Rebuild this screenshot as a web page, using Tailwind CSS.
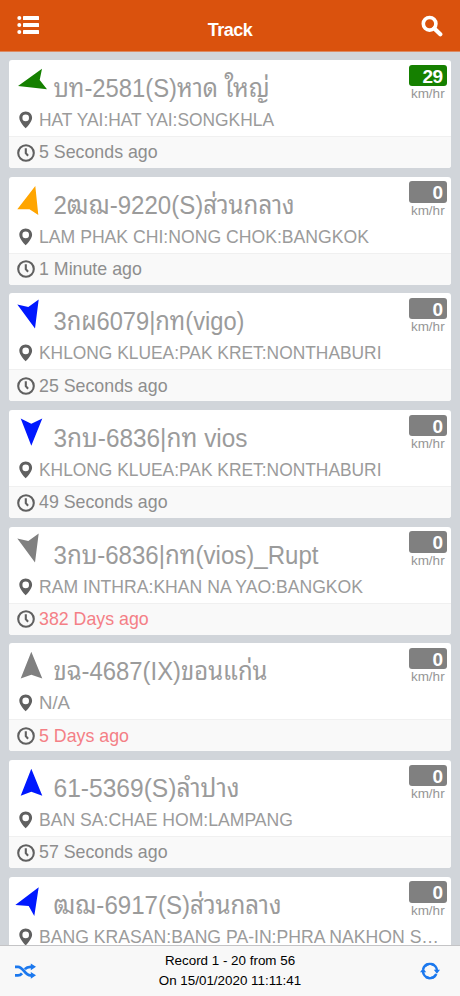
<!DOCTYPE html>
<html lang="th">
<head>
  <meta charset="UTF-8">
  <meta name="viewport" content="width=device-width, initial-scale=1.0">
  <script src="https://cdn.jsdelivr.net/npm/@tailwindcss/browser@4"></script>
  <title>Track</title>
</head>
<body class="flex flex-col h-screen overflow-hidden bg-[#d1d5da] font-['Liberation_Sans','Noto_Sans_Thai_Looped','Loma','Waree','Garuda',sans-serif]">
<header class="flex justify-between h-[51.5px] shrink-0 bg-[#da520d] text-white px-[17px] border-b border-[#dc8a62]">
  <svg class="w-[22px] h-5 mt-[15px]" viewBox="0 0 22 20" fill="currentColor">
    <circle cx="2.3" cy="3" r="2"/><circle cx="2.3" cy="10" r="2"/><circle cx="2.3" cy="17" r="2"/>
    <rect x="6" y="1" width="16" height="4" rx=".6"/><rect x="6" y="8" width="16" height="4" rx=".6"/><rect x="6" y="15" width="16" height="4" rx=".6"/>
  </svg>
  <h1 class="mt-[18px] text-[18px] leading-6 font-bold tracking-[-0.5px]">Track</h1>
  <svg class="w-[22px] h-[22px] mt-[15px]" viewBox="0 0 22 22" fill="none" stroke="currentColor">
    <circle cx="8.6" cy="8.8" r="6.3" stroke-width="3.6"/>
    <path d="M13.3 13.5 19.3 19.3" stroke-width="4.2" stroke-linecap="round"/>
  </svg>
</header>
<main id="list" class="flex-1 min-h-0 overflow-hidden flex flex-col gap-[8.7px] px-[9px] pt-[8.5px]"></main>
<footer class="flex items-center justify-between h-[51px] shrink-0 bg-[#f8f8f8] border-t border-[#c4c4c6] pl-[15px] pr-[20px]">
  <svg class="w-[21px] h-4" viewBox="0 0 21 16" fill="none" stroke="#1b78ee" stroke-width="2.8">
    <path d="M0 3.8h3c5.5 0 6.5 8.6 12.5 8.6h1M0 12.4h3c1.8 0 3-.9 4-2.1M9.8 6.1c1.4-1.5 3-2.3 5.7-2.3h1"/>
    <path d="M15.8 0.4 21 3.8 15.8 7.2zM15.8 8.9 21 12.3 15.8 15.7z" fill="#1b78ee" stroke="none"/>
  </svg>
  <div class="ml-[4px] text-center text-[13.4px] leading-5 text-black">
    <p>Record 1 - 20 from 56</p>
    <p>On 15/01/2020 11:11:41</p>
  </div>
  <svg class="w-5 h-[18px] -mt-px" viewBox="0 0 20 18" fill="none" stroke="#1b78ee" stroke-width="2.5">
    <path d="M3.1 7.5A7.1 7.1 0 0 1 8.6 2M11.4 2A7.1 7.1 0 0 1 17 9M16.3 12A7.1 7.1 0 0 1 11 16M8.8 16A7.1 7.1 0 0 1 3 9"/>
    <path d="M5 4.2A7.1 7.1 0 0 1 14 3.2M15 14A7.1 7.1 0 0 1 6 15"/>
    <path d="M13.8 7.8H20l-3.1 4zM0 10.2h6.2L3.1 6.2z" fill="#1b78ee" stroke="none"/>
  </svg>
</footer>

<script>
  const vehicles = [
    { name: 'บท-2581(S)หาด ใหญ่', w: 216, place: 'HAT YAI:HAT YAI:SONGKHLA', pw: 235, time: '5 Seconds ago', speed: 29, color: '#158000', arrow: '9,26 33,8.7 30.7,20 38,29.3' },
    { name: '2ฒฌ-9220(S)ส่วนกลาง', w: 241, place: 'LAM PHAK CHI:NONG CHOK:BANGKOK', pw: 330, time: '1 Minute ago', speed: 0, color: '#ffa500', arrow: '26.3,9 8.3,32.3 20.5,32.3 29.3,38' },
    { name: '3กผ6079|กท(vigo)', w: 191, place: 'KHLONG KLUEA:PAK KRET:NONTHABURI', pw: 342.5, time: '25 Seconds ago', speed: 0, color: '#0018ff', arrow: '8.3,11.4 19.3,14 29.7,6.4 26,35.4' },
    { name: '3กบ-6836|กท vios', w: 194, place: 'KHLONG KLUEA:PAK KRET:NONTHABURI', pw: 342.5, time: '49 Seconds ago', speed: 0, color: '#0018ff', arrow: '11.7,8.4 22.3,13.7 33.3,8.4 22.3,35.7' },
    { name: '3กบ-6836|กท(vios)_Rupt', w: 265, place: 'RAM INTHRA:KHAN NA YAO:BANGKOK', pw: 324, time: '382 Days ago', late: true, speed: 0, color: '#808080', arrow: '8.3,11.4 19.3,14 29.7,6.4 26,35.4' },
    { name: 'ขฉ-4687(IX)ขอนแก่น', w: 214, place: 'N/A', pw: 31, time: '5 Days ago', late: true, speed: 0, color: '#808080', arrow: '22.3,8.8 11.7,35.5 22.3,31.8 33.3,35.5' },
    { name: '61-5369(S)ลำปาง', w: 186, place: 'BAN SA:CHAE HOM:LAMPANG', pw: 254, time: '57 Seconds ago', speed: 0, color: '#0018ff', arrow: '22.3,8.8 11.7,35.8 22.3,31.8 33.3,35.8' },
    { name: 'ฒฌ-6917(S)ส่วนกลาง', w: 228, place: 'BANG KRASAN:BANG PA-IN:PHRA NAKHON S…', pw: 400, time: '', speed: 0, color: '#0018ff', arrow: '29.7,10.3 6.3,28 19.7,29 25.3,39' }
  ];

  document.getElementById('list').innerHTML = vehicles.map(v => `
    <article class="h-[108px] shrink-0 rounded-[3px] bg-white overflow-hidden flex flex-col">
      <div class="h-[76px] relative">
        <svg class="absolute left-0 top-0 w-11 h-11" viewBox="0 0 44 44"><polygon points="${v.arrow}" fill="${v.color}"/></svg>
        <svg class="block w-full h-[76px]" fill="#9b9b9b">
          <text x="44.5" y="37" font-size="25.5" textLength="${v.w}" lengthAdjust="spacingAndGlyphs">${v.name}</text>
          <text x="30" y="65.5" font-size="18" textLength="${v.pw}" lengthAdjust="spacingAndGlyphs">${v.place}</text>
          <path d="M16.7 51.5c-3.6 0-6.4 2.8-6.4 6.2 0 4.4 6.4 10.6 6.4 10.6s6.4-6.2 6.4-10.6c0-3.4-2.8-6.2-6.4-6.2zm0 3.1a3.3 3.3 0 1 1 0 6.6 3.3 3.3 0 0 1 0-6.6z" fill="#606060"/>
        </svg>
        <div class="absolute right-1 top-[4.6px] w-[38.5px] text-center">
          <div class="h-[21.4px] rounded-[3px] pr-[4.5px] text-right text-[19px] leading-[23px] font-bold tracking-[-0.6px] text-white ${v.speed ? 'bg-[#158000]' : 'bg-[#808080]'}">${v.speed}</div>
          <div class="text-[13.5px] leading-[15px] text-[#969696]">km/hr</div>
        </div>
      </div>
      <div class="flex-1 flex items-center gap-[4px] pl-2 border-t border-[#f0f0f0] bg-[#f9f9f9] text-[17.8px] ${v.late ? 'text-[#f47f86]' : 'text-[#8e8e8e]'}">
        <svg class="w-[18px] h-[18px]" viewBox="0 0 18 18" fill="none" stroke="#606060" stroke-width="2.1">
          <circle cx="9" cy="9" r="7.8"/><path d="M8.8 4.3v4.9l2.3 2.5"/>
        </svg>
        <span>${v.time}</span>
      </div>
    </article>`).join('');
</script>
</body>
</html>
